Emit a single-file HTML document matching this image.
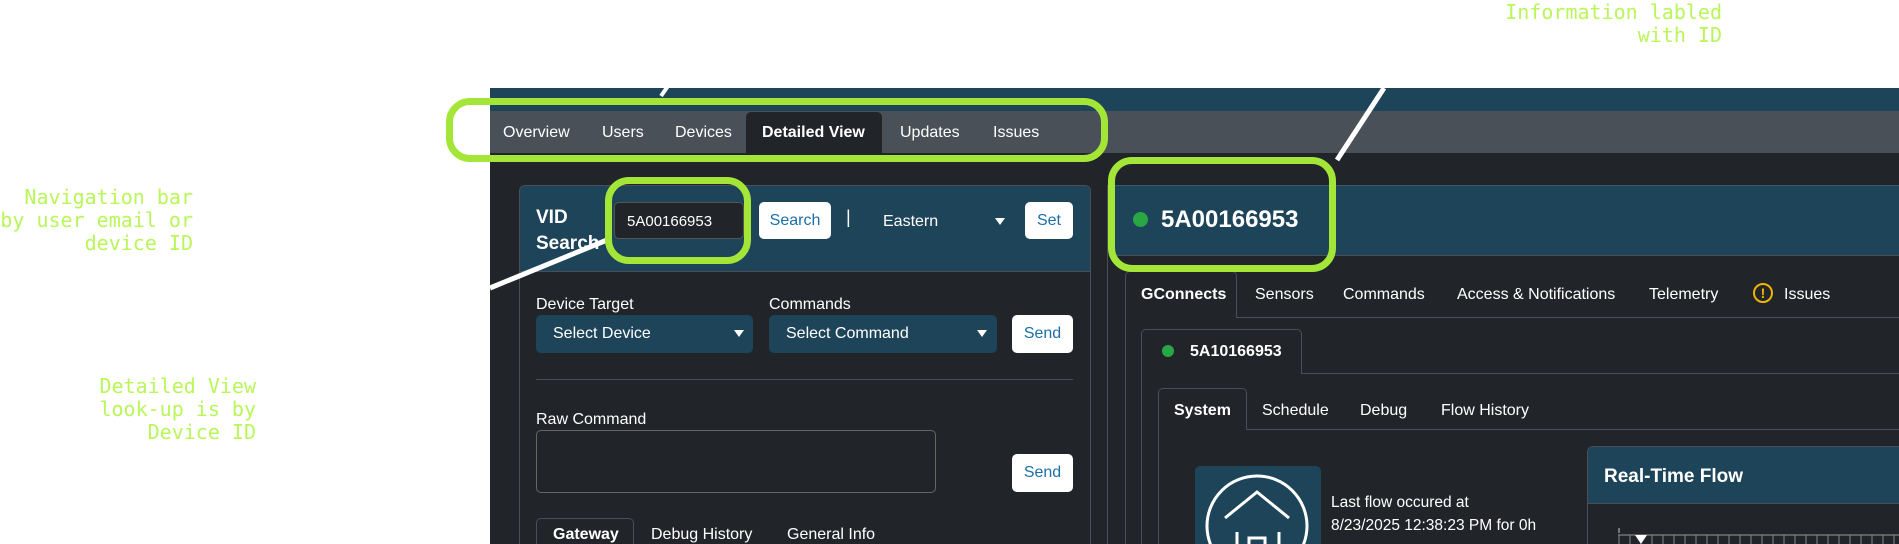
<!DOCTYPE html>
<html><head><meta charset="utf-8"><style>
*{box-sizing:border-box;margin:0;padding:0}
html,body{width:1899px;height:544px;overflow:hidden}
body{background:#fff;font-family:"Segoe UI","Liberation Sans",sans-serif;color:#fff}
#w{position:relative;width:1899px;height:544px;overflow:hidden}
.a{position:absolute}
.t{position:absolute;white-space:nowrap;line-height:1}
.ann{position:absolute;color:#b9f65a;font-family:"DejaVu Sans Mono","Liberation Mono",monospace;font-size:20px;line-height:23px;text-align:right;white-space:nowrap}
.btn{position:absolute;background:#fff;border-radius:5px;color:#1b6fa8;font-size:16px;display:flex;align-items:center;justify-content:center}
.sel{position:absolute;background:#1e4459;border-radius:5px;font-size:16px;display:flex;align-items:center;padding-left:17px}
.car{position:absolute;width:0;height:0;border-left:5px solid transparent;border-right:5px solid transparent;border-top:7px solid #fff}
.ln{position:absolute;background:#4a4f55}
.gb{position:absolute;border:7px solid #a4e638;border-radius:24px}
</style></head><body><div id="w">
<div class="a" style="left:490px;top:88px;width:1409px;height:456px;background:#212529"></div>
<div class="a" style="left:490px;top:88px;width:1409px;height:23px;background:#1e4459"></div>
<div class="a" style="left:490px;top:111px;width:1409px;height:42px;background:#495057"></div>
<div class="a" style="left:746px;top:112px;width:136px;height:41px;background:#212529;border-radius:5px 5px 0 0"></div>
<div class="t" style="left:503px;top:125px;font-size:16px">Overview</div>
<div class="t" style="left:602px;top:125px;font-size:16px">Users</div>
<div class="t" style="left:675px;top:125px;font-size:16px">Devices</div>
<div class="t" style="left:762px;top:125px;font-size:16px;font-weight:bold">Detailed View</div>
<div class="t" style="left:900px;top:125px;font-size:16px">Updates</div>
<div class="t" style="left:993px;top:125px;font-size:16px">Issues</div>

<!-- left card -->
<div class="a" style="left:519px;top:185px;width:572px;height:359px;border:1px solid #4a4f55;border-bottom:none;border-radius:6px 6px 0 0"></div>
<div class="a" style="left:520px;top:186px;width:570px;height:86px;background:#1e4459;border-radius:5px 5px 0 0;border-bottom:1px solid #4a4f55"></div>
<div class="t" style="left:536px;top:205px;font-size:19px;font-weight:bold;line-height:26px">VID<br>Search</div>
<div class="a" style="left:614px;top:202px;width:130px;height:37px;background:#212529;border:1px solid #555;border-radius:5px"></div>
<div class="t" style="left:627px;top:214px;font-size:15px">5A00166953</div>
<div class="btn" style="left:759px;top:202px;width:72px;height:37px">Search</div>
<div class="t" style="left:846px;top:208px;font-size:18px">|</div>
<div class="t" style="left:883px;top:214px;font-size:16px">Eastern</div>
<div class="car" style="left:995px;top:218px"></div>
<div class="btn" style="left:1025px;top:202px;width:48px;height:37px">Set</div>
<div class="t" style="left:536px;top:297px;font-size:16px">Device Target</div>
<div class="t" style="left:769px;top:297px;font-size:16px">Commands</div>
<div class="sel" style="left:536px;top:315px;width:217px;height:38px">Select Device</div>
<div class="car" style="left:734px;top:330px"></div>
<div class="sel" style="left:769px;top:315px;width:228px;height:38px">Select Command</div>
<div class="car" style="left:977px;top:330px"></div>
<div class="btn" style="left:1012px;top:315px;width:61px;height:38px">Send</div>
<div class="ln" style="left:536px;top:379px;width:537px;height:1px"></div>
<div class="t" style="left:536px;top:412px;font-size:16px">Raw Command</div>
<div class="a" style="left:536px;top:430px;width:400px;height:63px;border:1px solid #666;border-radius:5px"></div>
<div class="btn" style="left:1012px;top:454px;width:61px;height:38px">Send</div>
<div class="a" style="left:536px;top:518px;width:98px;height:26px;border:1px solid #4a4f55;border-bottom:none;border-radius:5px 5px 0 0"></div>
<div class="t" style="left:553px;top:527px;font-size:16px;font-weight:bold">Gateway</div>
<div class="t" style="left:651px;top:527px;font-size:16px">Debug History</div>
<div class="t" style="left:787px;top:527px;font-size:16px">General Info</div>

<!-- right panel -->
<div class="ln" style="left:1107px;top:185px;width:1px;height:359px"></div>
<div class="a" style="left:1114px;top:185px;width:785px;height:71px;background:#1e4459;border-top:1px solid #3a5a6c;border-bottom:1px solid #4a4f55"></div>
<div class="a" style="left:1133px;top:212px;width:15px;height:15px;border-radius:50%;background:#28a745"></div>
<div class="t" style="left:1161px;top:208px;font-size:24px;font-weight:bold">5A00166953</div>
<div class="a" style="left:1125px;top:271px;width:112px;height:47px;border:1px solid #4a4f55;border-bottom:none;border-radius:5px 5px 0 0"></div>
<div class="ln" style="left:1125px;top:300px;width:1px;height:244px"></div>
<div class="ln" style="left:1236px;top:317px;width:663px;height:1px"></div>
<div class="t" style="left:1141px;top:287px;font-size:16px;font-weight:bold">GConnects</div>
<div class="t" style="left:1255px;top:287px;font-size:16px">Sensors</div>
<div class="t" style="left:1343px;top:287px;font-size:16px">Commands</div>
<div class="t" style="left:1457px;top:287px;font-size:16px">Access &amp; Notifications</div>
<div class="t" style="left:1649px;top:287px;font-size:16px">Telemetry</div>
<div class="a" style="left:1753px;top:283px;width:20px;height:20px;border:2px solid #f0b400;border-radius:50%;color:#f0b400;font-size:14px;font-weight:bold;text-align:center;line-height:16px">!</div>
<div class="t" style="left:1784px;top:287px;font-size:16px">Issues</div>

<div class="a" style="left:1141px;top:329px;width:161px;height:45px;border:1px solid #4a4f55;border-bottom:none;border-radius:5px 5px 0 0"></div>
<div class="ln" style="left:1141px;top:350px;width:1px;height:194px"></div>
<div class="ln" style="left:1301px;top:373px;width:598px;height:1px"></div>
<div class="a" style="left:1162px;top:345px;width:12px;height:12px;border-radius:50%;background:#28a745"></div>
<div class="t" style="left:1190px;top:344px;font-size:16px;font-weight:bold">5A10166953</div>

<div class="a" style="left:1158px;top:388px;width:89px;height:42px;border:1px solid #4a4f55;border-bottom:none;border-radius:5px 5px 0 0"></div>
<div class="ln" style="left:1158px;top:410px;width:1px;height:134px"></div>
<div class="ln" style="left:1246px;top:429px;width:653px;height:1px"></div>
<div class="t" style="left:1174px;top:403px;font-size:16px;font-weight:bold">System</div>
<div class="t" style="left:1262px;top:403px;font-size:16px">Schedule</div>
<div class="t" style="left:1360px;top:403px;font-size:16px">Debug</div>
<div class="t" style="left:1441px;top:403px;font-size:16px">Flow History</div>

<div class="a" style="left:1195px;top:466px;width:126px;height:78px;background:#1e4459;border-radius:5px 5px 0 0"></div>
<svg class="a" style="left:1195px;top:466px" width="126" height="78" viewBox="0 0 126 78">
<circle cx="62" cy="60" r="50" fill="none" stroke="#fff" stroke-width="3"/>
<path d="M30 52 L62 26 L94 52 M42 66 V78 M84 66 V78 M54 78 V72 H70 V78" fill="none" stroke="#fff" stroke-width="3"/>
</svg>
<div class="t" style="left:1331px;top:491px;font-size:15.5px;font-family:'Liberation Sans',sans-serif;line-height:23px">Last flow occured at<br>8/23/2025 12:38:23 PM for 0h</div>

<div class="a" style="left:1587px;top:446px;width:312px;height:98px;border:1px solid #4a4f55;border-bottom:none;border-right:none;border-radius:6px 0 0 0"></div>
<div class="a" style="left:1588px;top:447px;width:311px;height:57px;background:#1e4459;border-radius:5px 0 0 0;border-bottom:1px solid #4a4f55"></div>
<div class="t" style="left:1604px;top:467px;font-size:19px;font-weight:bold">Real-Time Flow</div>
<svg class="a" style="left:1618px;top:526px" width="281" height="18">
<line x1="1" y1="2" x2="1" y2="7" stroke="#ccc"/>
<line x1="0" y1="9" x2="281" y2="9" stroke="#999"/>
<g stroke="#888">
<line x1="1" y1="9" x2="1" y2="18"/><line x1="12" y1="9" x2="12" y2="18"/><line x1="23" y1="9" x2="23" y2="18"/><line x1="34" y1="9" x2="34" y2="18"/><line x1="45" y1="9" x2="45" y2="18"/><line x1="56" y1="9" x2="56" y2="18"/><line x1="67" y1="9" x2="67" y2="18"/><line x1="78" y1="9" x2="78" y2="18"/><line x1="89" y1="9" x2="89" y2="18"/><line x1="100" y1="9" x2="100" y2="18"/><line x1="111" y1="9" x2="111" y2="18"/><line x1="122" y1="9" x2="122" y2="18"/><line x1="133" y1="9" x2="133" y2="18"/><line x1="144" y1="9" x2="144" y2="18"/><line x1="155" y1="9" x2="155" y2="18"/><line x1="166" y1="9" x2="166" y2="18"/><line x1="177" y1="9" x2="177" y2="18"/><line x1="188" y1="9" x2="188" y2="18"/><line x1="199" y1="9" x2="199" y2="18"/><line x1="210" y1="9" x2="210" y2="18"/><line x1="221" y1="9" x2="221" y2="18"/><line x1="232" y1="9" x2="232" y2="18"/><line x1="243" y1="9" x2="243" y2="18"/><line x1="254" y1="9" x2="254" y2="18"/><line x1="265" y1="9" x2="265" y2="18"/><line x1="276" y1="9" x2="276" y2="18"/>
</g>
<path d="M17 9 L29 9 L23 18 Z" fill="#fff"/>
</svg>

<svg class="a" style="left:0;top:0" width="1899" height="544">
<line x1="607" y1="240" x2="490" y2="288" stroke="#fff" stroke-width="5"/>
<line x1="1337" y1="160" x2="1384" y2="88" stroke="#fff" stroke-width="5"/>
<line x1="661" y1="96" x2="668" y2="86" stroke="#fff" stroke-width="4"/>
</svg>
<div class="gb" style="left:446px;top:98px;width:662px;height:64px"></div>
<div class="gb" style="left:605px;top:177px;width:146px;height:87px"></div>
<div class="gb" style="left:1108px;top:157px;width:228px;height:115px"></div>

<div class="ann" style="right:177px;top:1px">Information labled<br>with ID</div>
<div class="ann" style="right:1706px;top:186px">Navigation bar<br>by user email or<br>device ID</div>
<div class="ann" style="right:1643px;top:375px">Detailed View<br>look-up is by<br>Device ID</div>
</div></body></html>
